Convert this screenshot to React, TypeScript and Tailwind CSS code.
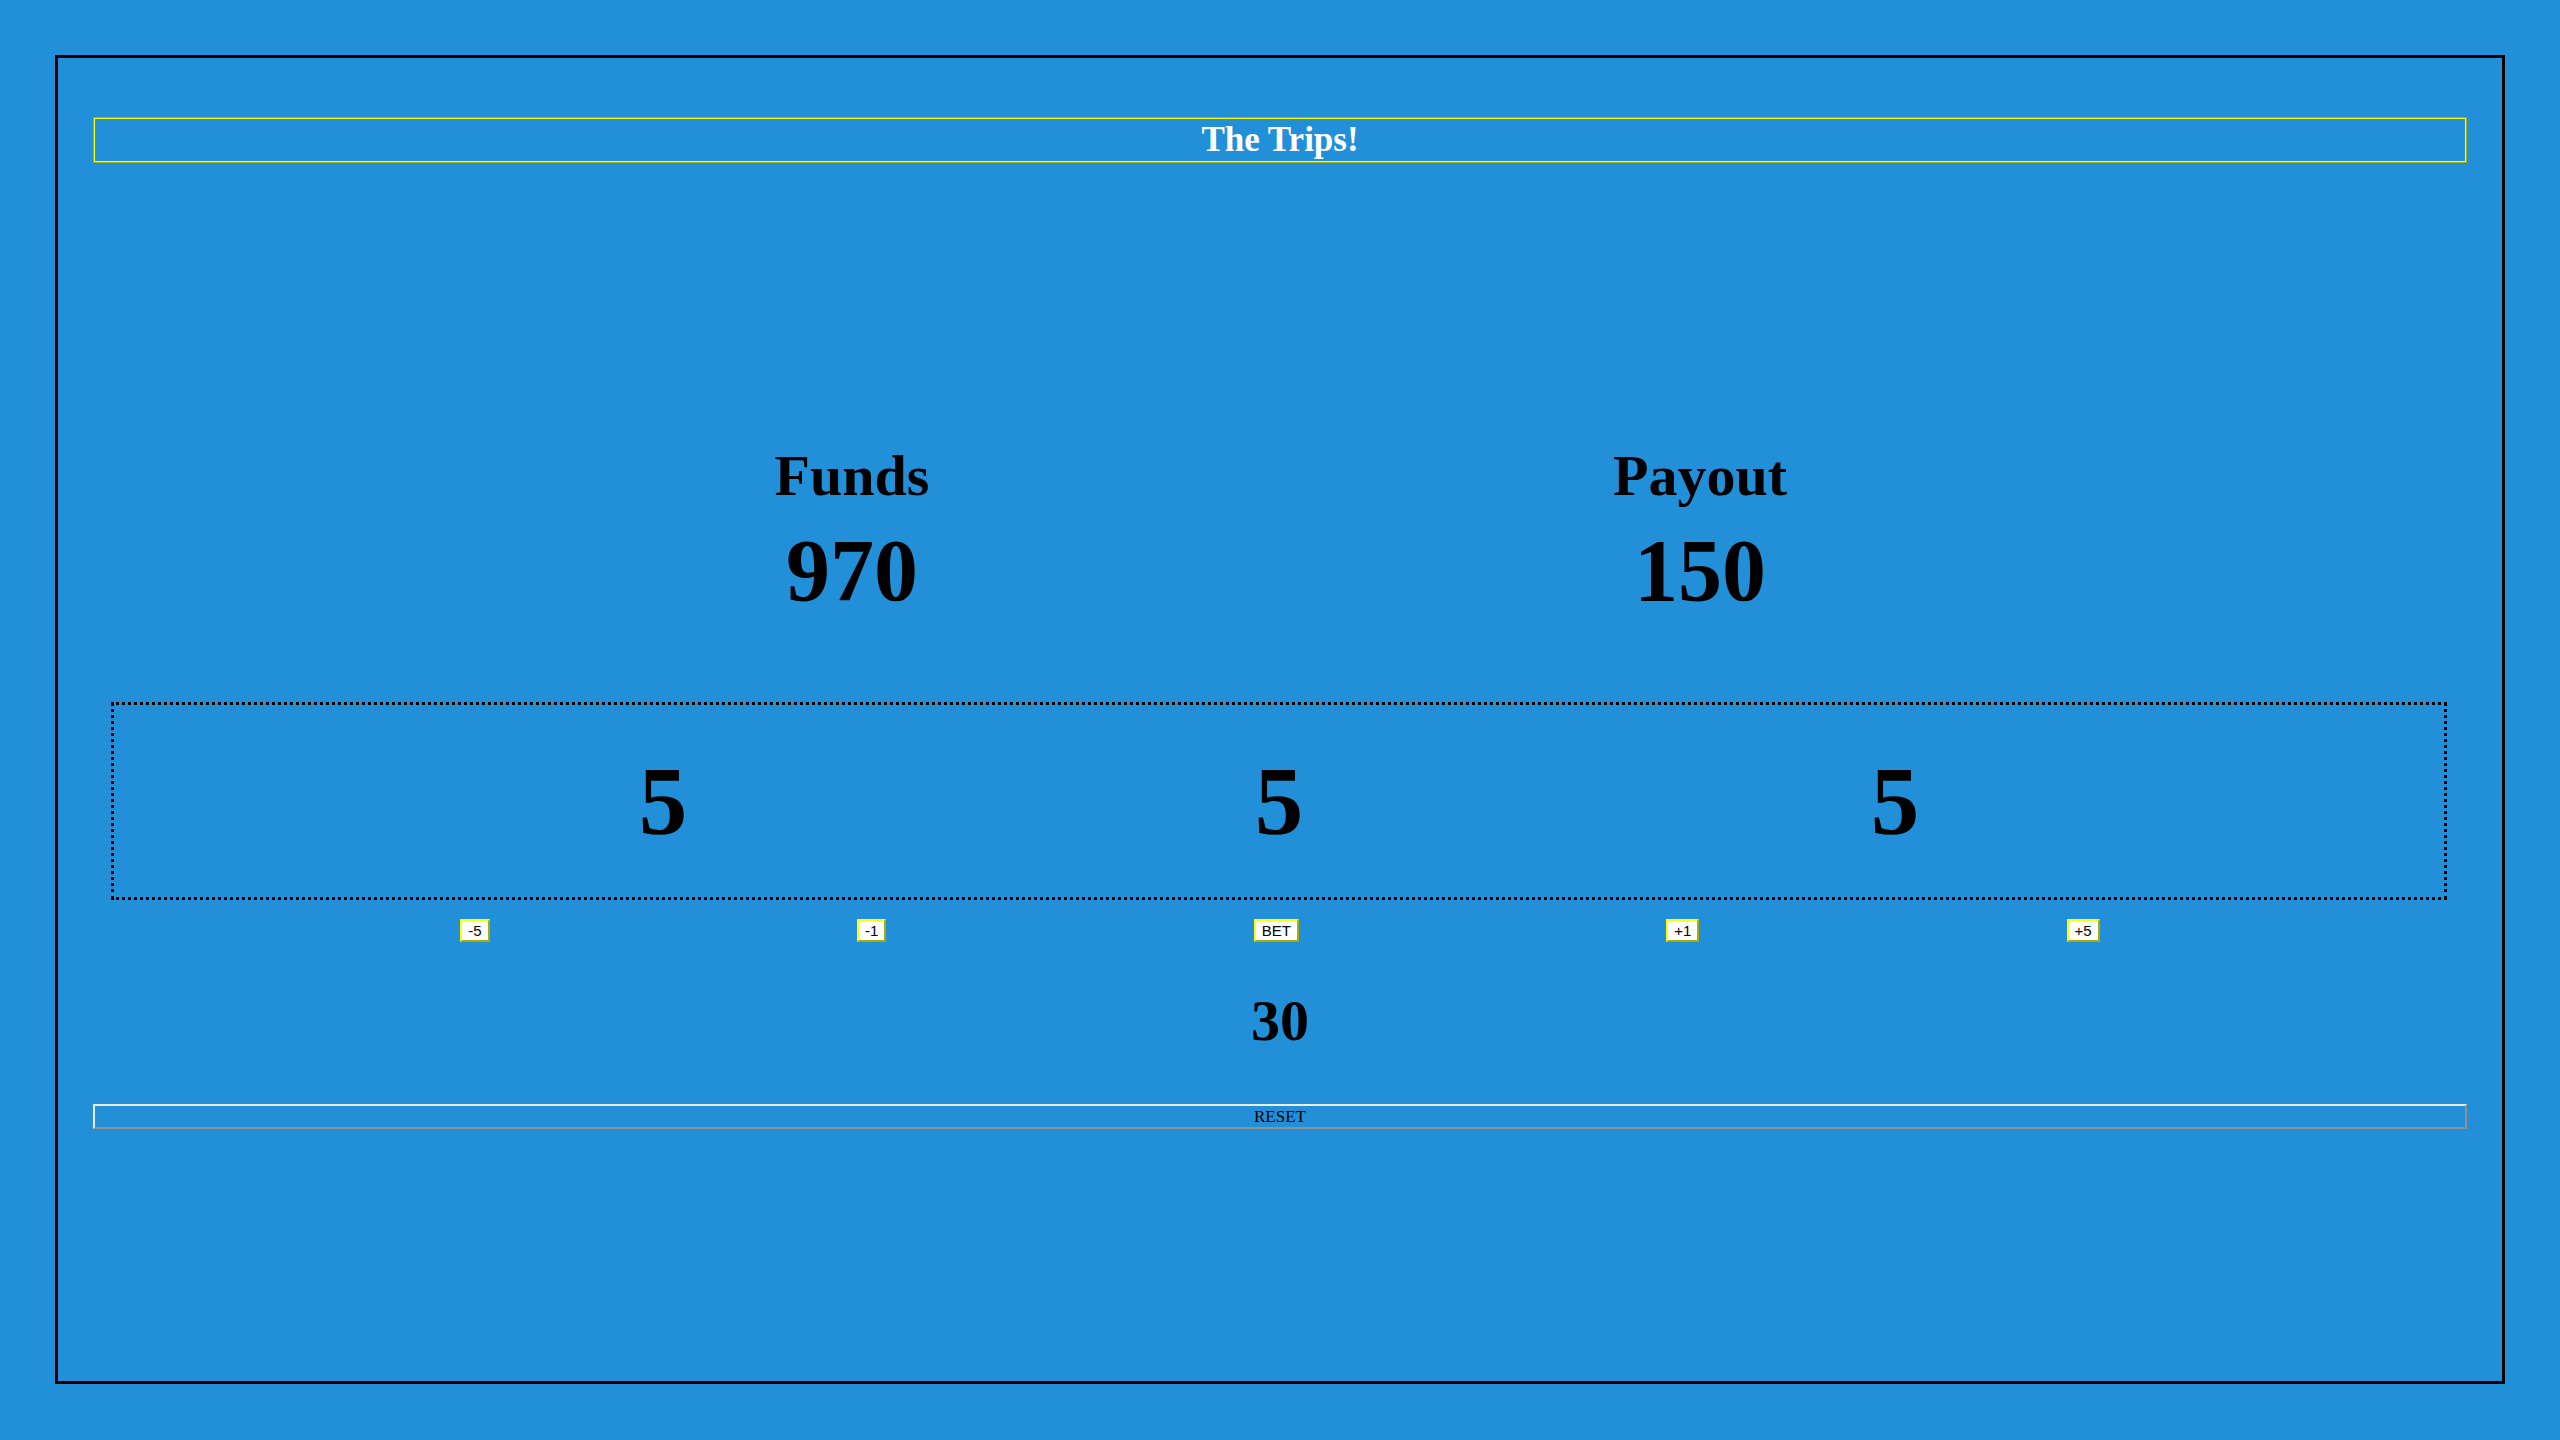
const stats = [
  { label: "Funds", value: 970 },
  { label: "Payout", value: 150 },
];

const dice = [5, 5, 5];

const betButtons = ["-5", "-1", "BET", "+1", "+5"];

export default function App() {
  return (
    <div className="min-h-screen bg-[#2190d8] p-[55px] font-['Liberation_Serif',serif] text-black">
      <div className="h-[1329px] border-[3px] border-black px-[35px] pt-[59px]">
        {/* Title */}
        <div className="flex h-[46px] items-center justify-center border border-[#acac00] shadow-[inset_0_0_0_1px_#ffff00]">
          <h1 className="text-[35px] font-bold leading-[42px] text-white">The Trips!</h1>
        </div>

        {/* Funds / Payout */}
        <div className="mt-[284px] grid grid-cols-[848px_848px] justify-center pr-[8px]">
          {stats.map((s) => (
            <div key={s.label} className="flex flex-col items-center">
              <div className="text-[58px] font-bold leading-none">{s.label}</div>
              <div className="mt-[22px] text-[88px] font-bold leading-none">{s.value}</div>
            </div>
          ))}
        </div>

        {/* Dice */}
        <div className="ml-[18px] mr-[20px] mt-[87px] flex h-[198px] items-center justify-center border-[3px] border-dotted border-black">
          {dice.map((d, idx) => (
            <div key={idx} className="w-[616px] text-center text-[97px] font-bold leading-none">
              {d}
            </div>
          ))}
        </div>

        {/* Bet controls */}
        <div className="mt-[19px] flex items-center justify-evenly">
          {betButtons.map((b) => (
            <button
              key={b}
              className="border-2 border-solid border-t-[#ffff00] border-l-[#ffff00] border-r-[#acac00] border-b-[#acac00] bg-white px-[6px] py-px font-['Liberation_Sans',sans-serif] text-[15px] leading-[17px] text-black"
            >
              {b}
            </button>
          ))}
        </div>

        <div className="mt-[50px] text-center text-[58px] font-bold leading-none">30</div>

        <button className="mt-[54px] block h-[25px] w-full border-2 border-solid border-t-[#ececec] border-l-[#ececec] border-r-[#909090] border-b-[#909090] bg-transparent font-['Liberation_Serif',serif] text-[17px] leading-none text-black">
          RESET
        </button>
      </div>
    </div>
  );
}
